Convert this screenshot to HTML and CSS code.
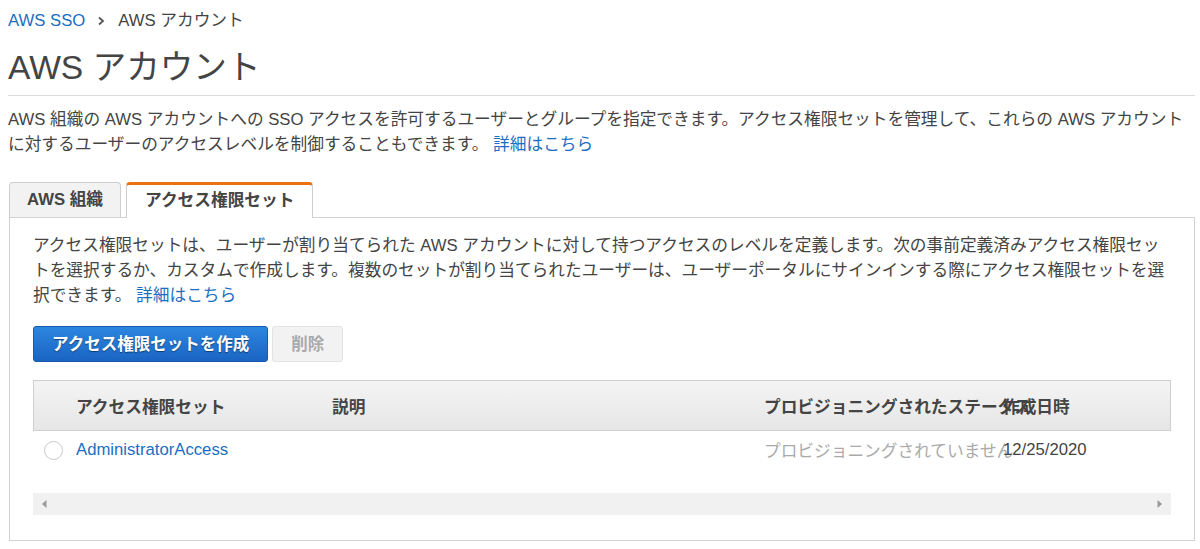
FILE: index.html
```html
<!DOCTYPE html>
<html lang="ja">
<head>
<meta charset="utf-8">
<title>AWS アカウント</title>
<link rel="stylesheet" href="styles.css">
</head>
<body>
<div class="page">
  <nav class="crumbs">
    <a class="link" href="#">AWS SSO</a>
    <svg class="chev" width="8" height="10" viewBox="0 0 8 10"><polyline points="2,1.5 6,5 2,8.5" fill="none" stroke="#555" stroke-width="1.8"/></svg>
    <span>AWS アカウント</span>
  </nav>
  <h1 class="title">AWS アカウント</h1>
  <p class="intro">AWS 組織の AWS アカウントへの SSO アクセスを許可するユーザーとグループを指定できます。アクセス権限セットを管理して、これらの AWS アカウント<br>に対するユーザーのアクセスレベルを制御することもできます。 <a class="link" href="#">詳細はこちら</a></p>

  <div class="tabbox">
    <div class="tabs">
      <div class="tab">AWS 組織</div>
      <div class="tab active">アクセス権限セット</div>
    </div>
    <div class="panel">
      <p class="desc">アクセス権限セットは、ユーザーが割り当てられた AWS アカウントに対して持つアクセスのレベルを定義します。次の事前定義済みアクセス権限セッ<br>トを選択するか、カスタムで作成します。複数のセットが割り当てられたユーザーは、ユーザーポータルにサインインする際にアクセス権限セットを選<br>択できます。 <a class="link" href="#">詳細はこちら</a></p>
      <div class="actions">
        <button class="btn primary">アクセス権限セットを作成</button>
        <button class="btn disabled">削除</button>
      </div>
      <div class="table">
        <div class="row head">
          <div class="cell"></div>
          <div class="cell">アクセス権限セット</div>
          <div class="cell">説明</div>
          <div class="cell">プロビジョニングされたステータス</div>
          <div class="cell">作成日時</div>
        </div>
        <div class="row body">
          <div class="cell"><span class="radio"></span></div>
          <div class="cell"><a class="link" href="#">AdministratorAccess</a></div>
          <div class="cell"></div>
          <div class="cell muted">プロビジョニングされていません</div>
          <div class="cell">12/25/2020</div>
        </div>
        <div class="scrollbar">
          <svg width="6" height="10" viewBox="0 0 6 10"><polygon points="5.5,1 1,5 5.5,9" fill="#9a9a9a"/></svg>
          <svg width="6" height="10" viewBox="0 0 6 10"><polygon points="0.5,1 5,5 0.5,9" fill="#9a9a9a"/></svg>
        </div>
      </div>
    </div>
  </div>
</div>
</body>
</html>
```

FILE: styles.css
```css
* { box-sizing: border-box; }

body {
  margin: 0;
  font-family: "Liberation Sans", "Noto Sans CJK JP", sans-serif;
  font-size: 16.7px;
  color: #444;
  background: #fff;
}

.page {
  padding: 0 5px 0 8px;
}

.link {
  color: #1b6ec2;
  text-decoration: none;
}

.crumbs {
  display: flex;
  align-items: center;
  padding-top: 8px;
  line-height: 25px;
  height: 33px;
}

.chev {
  margin: 0 13px 0 12px;
}

.title {
  margin: 15px 0 0;
  font-size: 33.6px;
  font-weight: normal;
  line-height: 40px;
  color: #444;
  padding-bottom: 7px;
  border-bottom: 1px solid #dcdcdc;
}

.intro {
  margin: 11px 0 0;
  line-height: 25px;
  white-space: nowrap;
}

.tabbox {
  margin-top: 25px;
  margin-left: 1px;
}

.tabs {
  display: flex;
  align-items: flex-end;
  gap: 5px;
}

.tab {
  height: 35px;
  padding: 0 17px;
  border: 1px solid #cdcdcd;
  border-bottom: none;
  border-radius: 4px 4px 0 0;
  background: #f2f2f2;
  font-weight: bold;
  line-height: 34px;
  color: #444;
  white-space: nowrap;
}

.tab.active {
  position: relative;
  z-index: 1;
  height: 36px;
  margin-bottom: -1px;
  padding: 0 18px;
  background: #fff;
  border-top: 3px solid #ec7211;
  line-height: 32px;
}

.panel {
  border: 1px solid #d2d2d2;
  padding: 15px 23px 25px;
}

.desc {
  margin: 0;
  line-height: 25px;
  white-space: nowrap;
}

.actions {
  display: flex;
  gap: 4px;
  margin-top: 18px;
}

.btn {
  height: 36px;
  font-family: inherit;
  font-size: 16.5px;
  font-weight: bold;
  border-radius: 3px;
  padding: 0 18px;
  line-height: 34px;
}

.btn.primary {
  color: #fff;
  background: linear-gradient(#2c86e0, #1a64c2);
  border: 1px solid #1a5aa8;
  text-shadow: 0 1px 1px rgba(0, 0, 0, 0.45);
}

.btn.disabled {
  color: #aaa;
  background: #f2f2f2;
  border: 1px solid #e3e3e3;
}

.table {
  margin-top: 18px;
}

.row {
  display: grid;
  grid-template-columns: 43px 256px 432px 239px minmax(0, 1fr);
  align-items: center;
}

.cell {
  white-space: nowrap;
  min-width: 0;
}

.row.head {
  height: 51px;
  background: linear-gradient(#f4f4f4, #e6e6e6);
  box-shadow: inset 0 0 0 1px #cfcfcf;
  font-weight: bold;
  color: #444;
}

.row.body {
  height: 38px;
}

.muted {
  color: #aaa;
}

.radio {
  display: block;
  width: 19px;
  height: 19px;
  margin-left: 11px;
  border: 1px solid #cacaca;
  border-radius: 50%;
  background: #fff;
}

.scrollbar {
  display: flex;
  justify-content: space-between;
  align-items: center;
  height: 22px;
  margin-top: 24px;
  padding: 0 8px 0 8px;
  background: #f1f1f1;
}
```
